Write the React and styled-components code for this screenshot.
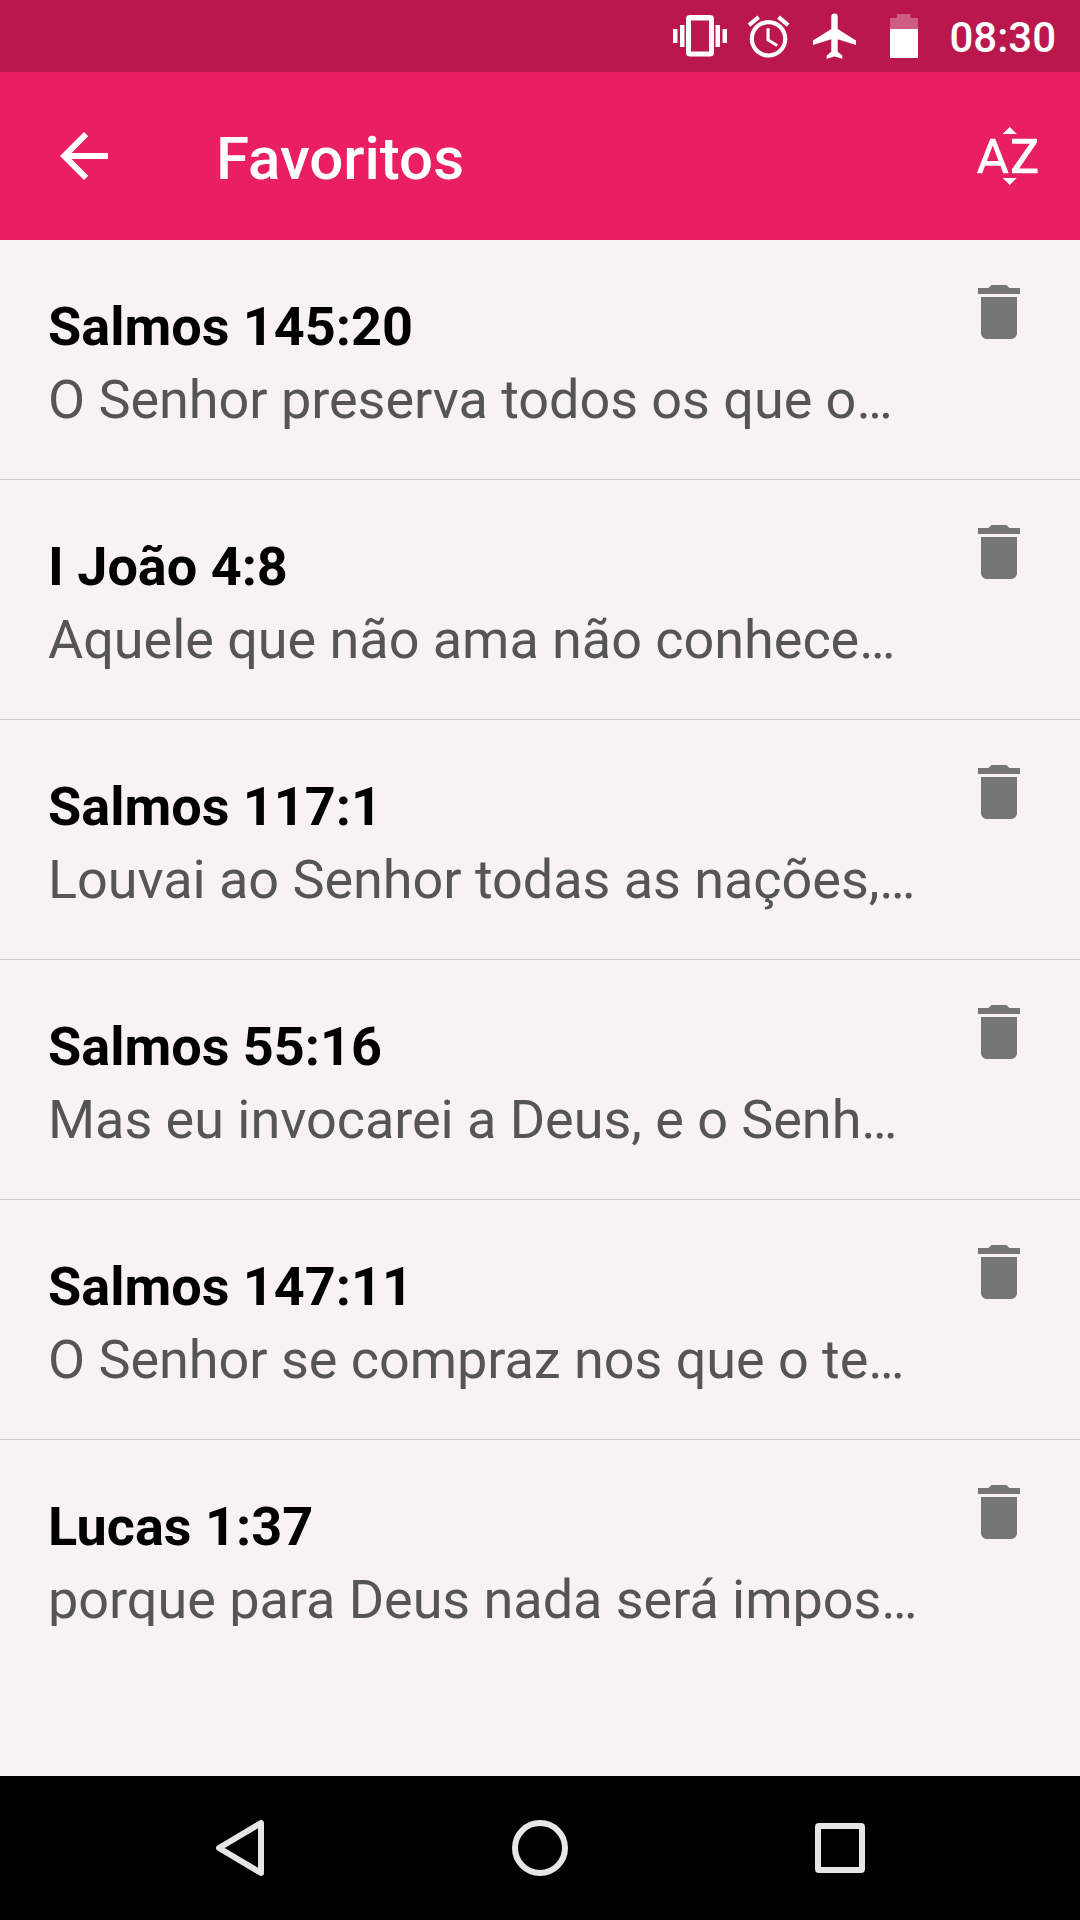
import React from 'react';
import styled, { createGlobalStyle } from 'styled-components';

const GlobalStyle = createGlobalStyle`
  * {
    box-sizing: border-box;
  }

  body {
    margin: 0;
    font-family: Roboto, 'Liberation Sans', sans-serif;
    background: #f8f2f4;
  }
`;

const Screen = styled.div`
  display: flex;
  flex-direction: column;
  width: 1080px;
  height: 1920px;
  overflow: hidden;
`;

const StatusBar = styled.div`
  display: flex;
  justify-content: flex-end;
  align-items: center;
  height: 72px;
  padding-right: 24px;
  background: #ba184d;
  color: white;

  svg {
    flex: none;
    fill: white;
  }
`;

const Clock = styled.span`
  font-size: 42px;
  font-weight: 500;
  line-height: 50px;
  margin: 4px 0 0 29px;
`;

const AppBar = styled.header`
  display: flex;
  align-items: center;
  height: 168px;
  padding: 0 36px 0 48px;
  background: #e91e63;
  color: white;
`;

const IconButton = styled.button`
  display: flex;
  flex: none;
  padding: 0;
  border: 0;
  background: none;
  color: inherit;

  svg {
    fill: currentColor;
  }
`;

const Title = styled.h1`
  flex-grow: 1;
  margin: 6px 0 0 96px;
  font-size: 60px;
  font-weight: 500;
  line-height: 70px;
`;

const List = styled.ul`
  flex-grow: 1;
  margin: 0;
  padding: 0;
  list-style: none;
`;

const Row = styled.li`
  display: flex;
  align-items: flex-start;
  justify-content: space-between;
  height: 240px;
  padding: 36px 45px 0 48px;
  border-bottom: ${p => p.$last ? 'none' : '1px solid #cbc8c9'};
`;

const Verse = styled.div`
  width: 880px;
  padding-top: 19px;
  font-size: 54px;
  white-space: nowrap;

  .reference {
    color: black;
    font-weight: 700;
    line-height: 64px;
  }

  .text {
    margin-top: 9px;
    height: ${p => p.$last ? '58px' : '64px'};
    overflow: hidden;
    color: #555;
    letter-spacing: -0.04px;
    line-height: 64px;
  }
`;

const NavBar = styled.nav`
  display: flex;
  justify-content: center;
  gap: 200px;
  align-items: center;
  height: 144px;
  background: black;

  svg {
    fill: none;
    stroke: #e6e6e6;
    stroke-width: 6;
    stroke-linejoin: round;
  }
`;

const favorites = [
  { reference: 'Salmos 145:20', text: 'O Senhor preserva todos os que o…' },
  { reference: 'I João 4:8', text: 'Aquele que não ama não conhece…' },
  { reference: 'Salmos 117:1', text: 'Louvai ao Senhor todas as nações,…' },
  { reference: 'Salmos 55:16', text: 'Mas eu invocarei a Deus, e o Senh…' },
  { reference: 'Salmos 147:11', text: 'O Senhor se compraz nos que o te…' },
  { reference: 'Lucas 1:37', text: 'porque para Deus nada será impos…' },
];

const StatusIcons = () => (
  <svg width="250" height="72" viewBox="670 0 250 72">
    {/* vibrate */}
    <path d="M673 29h4.500v14h-4.500zM680 25h4.500v22h-4.500zM715.500 25h4.500v22h-4.500zM722.500 29h4.500v14h-4.500z" />
    <path fillRule="evenodd" d="M690 15h20a4 4 0 0 1 4 4v33.500a4 4 0 0 1-4 4h-20a4 4 0 0 1-4-4V19a4 4 0 0 1 4-4zm1 5.500v31h18v-31z" />
    {/* alarm */}
    <g transform="translate(743.500 11.600) scale(2.090)">
      <path d="M22 5.720l-4.600-3.860-1.290 1.530 4.600 3.860L22 5.720zM7.880 3.390L6.600 1.860 2 5.710l1.290 1.530 4.590-3.850zM12.500 8H11v6l4.750 2.850.75-1.230-4-2.370V8zM12 4c-4.970 0-9 4.030-9 9s4.020 9 9 9c4.970 0 9-4.030 9-9s-4.030-9-9-9zm0 16c-3.870 0-7-3.130-7-7s3.130-7 7-7 7 3.130 7 7-3.130 7-7 7z" />
    </g>
    {/* airplane */}
    <path d="M856 45v-4.500L837.700 29V16.600a3.200 3.200 0 0 0-6.400 0V29L813 40.500V45l18.300-5.800V51.800L826.700 55.500V58.800L834.500 56.500L842.300 58.800V55.500L837.700 51.800V39.200z" />
    {/* battery */}
    <path opacity=".3" d="M897 14h13.500v4h7.500v11h-28V18h7z" />
    <path d="M890 29h28v29h-28z" />
  </svg>
);

const BackIcon = () => (
  <svg width="72" height="72" viewBox="0 0 24 24">
    <path d="M20 11H7.830l5.590-5.590L12 4l-8 8 8 8 1.410-1.410L7.830 13H20v-2z" />
  </svg>
);

const SortIcon = () => (
  <svg width="72" height="72" viewBox="0 0 24 24">
    <path d="M14.940 4.660h-4.720l2.360-2.360 2.360 2.360zm-4.690 14.710h4.660l-2.330 2.330-2.330-2.330zM6.100 6.270L1.600 17.730h1.840l.920-2.450h5.110l.920 2.450h1.840L7.740 6.270H6.100zm-1.130 7.370l1.940-5.180 1.940 5.180H4.970zM15.730 16.140h6.120v1.590h-8.530v-1.290l5.920-8.560h-5.880v-1.600h8.300v1.260l-5.930 8.600z" />
  </svg>
);

const DeleteIcon = () => (
  <svg width="72" height="72" viewBox="0 0 24 24">
    <path fill="#757575" d="M6 19c0 1.100.9 2 2 2h8c1.100 0 2-.9 2-2V7H6v12zM19 4h-3.500l-1-1h-5l-1 1H5v2h14V4z" />
  </svg>
);

const FavoriteRow = ({reference, text, last}) => (
  <Row $last={last}>
    <Verse $last={last}>
      <div className="reference">{reference}</div>
      <div className="text">{text}</div>
    </Verse>
    <IconButton aria-label="Remover">
      <DeleteIcon />
    </IconButton>
  </Row>
);

const App = () => (
  <>
    <GlobalStyle />
    <Screen>
      <StatusBar>
        <StatusIcons />
        <Clock>08:30</Clock>
      </StatusBar>
      <AppBar>
        <IconButton aria-label="Voltar"><BackIcon /></IconButton>
        <Title>Favoritos</Title>
        <IconButton aria-label="Ordenar"><SortIcon /></IconButton>
      </AppBar>
      <List>
        {favorites.map((item, i) => (
          <FavoriteRow key={item.reference} {...item} last={i === favorites.length - 1} />
        ))}
      </List>
      <NavBar>
        <svg width="100" height="100" viewBox="0 0 100 100">
          <path d="M71 25v50L29 50z" />
        </svg>
        <svg width="100" height="100" viewBox="0 0 100 100">
          <circle cx="50" cy="50" r="25" />
        </svg>
        <svg width="100" height="100" viewBox="0 0 100 100">
          <rect x="28" y="28" width="44" height="44" rx="1" />
        </svg>
      </NavBar>
    </Screen>
  </>
);

export default App;
